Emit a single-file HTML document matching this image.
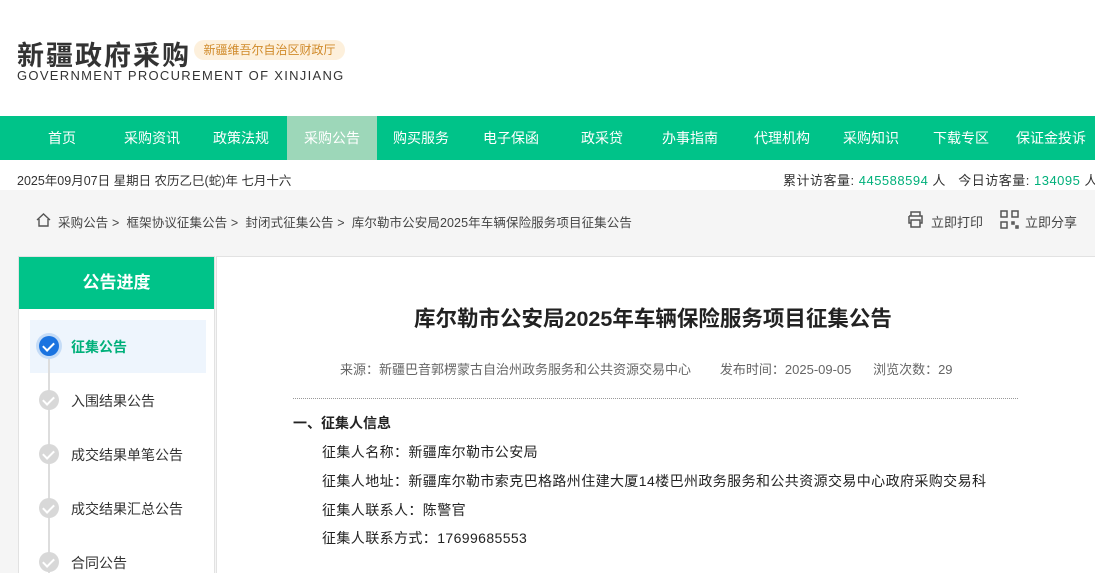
<!DOCTYPE html>
<html><head><meta charset="utf-8"><style>
*{margin:0;padding:0;box-sizing:border-box}
html,body{width:1095px;height:573px;overflow:hidden}
body{background:#fff;font-family:"Liberation Sans","Noto Sans CJK SC",sans-serif;color:#333;position:relative}
.a{position:absolute;white-space:nowrap}
.nav{position:absolute;left:0;top:116px;width:1095px;height:44px;background:#00c389}
.nav span{position:absolute;top:0;height:44px;line-height:44px;color:#fff;font-size:14px;transform:translateX(-50%);white-space:nowrap}
.gray{position:absolute;left:0;top:190px;width:1095px;height:383px;background:#f5f5f5}
.side{position:absolute;left:18px;top:256px;width:197px;height:330px;background:#fff;border:1px solid #e2e2e2;overflow:hidden}
.main{position:absolute;left:216px;top:256px;width:890px;height:330px;background:#fff;border:1px solid #e2e2e2}
.dot{position:absolute;left:20px;width:20px;height:20px;border-radius:50%;background:#d8d8d8}
.dot::after{content:"";position:absolute;left:6px;top:4px;width:5px;height:9px;border:solid #fff;border-width:0 2px 2px 0;transform:rotate(45deg)}
.step{position:absolute;left:52px;font-size:14px;color:#333}
.b{font-size:14px;color:#222;letter-spacing:0.4px}
</style></head><body>
<div class="a" style="left:17px;top:34px;font-size:27px;font-weight:bold;color:#333;letter-spacing:2px">新疆政府采购</div>
<div class="a" style="left:194px;top:40px;width:151px;height:20px;border-radius:10px;background:#fdf0dc;color:#d08a2a;font-size:12px;line-height:20px;text-align:center">新疆维吾尔自治区财政厅</div>
<div class="a" style="left:17px;top:68px;font-size:13px;color:#333;letter-spacing:1.3px">GOVERNMENT PROCUREMENT OF XINJIANG</div>
<div class="nav">
<div style="position:absolute;left:287px;top:0;width:90px;height:44px;background:#9dd7b9"></div>
<span style="left:62px">首页</span><span style="left:152px">采购资讯</span><span style="left:241px">政策法规</span><span style="left:332px">采购公告</span><span style="left:421px">购买服务</span><span style="left:511px">电子保函</span><span style="left:602px">政采贷</span><span style="left:690px">办事指南</span><span style="left:782px">代理机构</span><span style="left:871px">采购知识</span><span style="left:961px">下载专区</span><span style="left:1051px">保证金投诉</span>
</div>
<div class="a" style="left:17px;top:170px;font-size:12.5px">2025年09月07日 星期日 农历乙巳(蛇)年 七月十六</div>
<div class="a" style="left:783px;top:170px;font-size:13px;letter-spacing:0.5px">累计访客量: <span style="color:#00b07a">445588594</span> 人 &nbsp; 今日访客量: <span style="color:#00b07a">134095</span> 人</div>
<div class="gray"></div>
<svg class="a" style="left:35px;top:212px" width="17" height="16" viewBox="0 0 17 16"><path d="M2 8L8.5 2 15 8M4 7v7h9V7" fill="none" stroke="#555" stroke-width="1.4"/></svg>
<div class="a" style="left:58px;top:212px;font-size:12.5px;color:#444;letter-spacing:0.1px">采购公告 &gt; &nbsp;框架协议征集公告 &gt; &nbsp;封闭式征集公告 &gt; &nbsp;库尔勒市公安局2025年车辆保险服务项目征集公告</div>
<svg class="a" style="left:906px;top:210px" width="19" height="18" viewBox="0 0 19 18"><path d="M5 6V2h9v4M3 6h13v7h-2M5 13H3V6M5 10h9v7H5z" fill="none" stroke="#555" stroke-width="1.5"/></svg>
<div class="a" style="left:931px;top:212px;font-size:13px;color:#444">立即打印</div>
<svg class="a" style="left:1000px;top:210px" width="19" height="19" viewBox="0 0 19 19" fill="none" stroke="#555" stroke-width="1.5"><rect x="1" y="1" width="6" height="6"/><rect x="12" y="1" width="6" height="6"/><rect x="1" y="12" width="6" height="6"/><path d="M12 12h2v2h-2zM16 16h2v2h-2z"/></svg>
<div class="a" style="left:1025px;top:212px;font-size:13px;color:#444">立即分享</div>
<div class="side">
<div style="position:absolute;left:0;top:0;width:195px;height:52px;background:#00c389;color:#fff;font-size:17px;font-weight:bold;text-align:center;line-height:52px">公告进度</div>
<div style="position:absolute;left:11px;top:63px;width:176px;height:53px;background:#eef5fd"></div>
<div style="position:absolute;left:29px;top:100px;width:2px;height:240px;background:#ddd"></div>
<div class="dot" style="top:79px;background:#1a73e0;box-shadow:0 0 0 3px #c5dcf7"></div>
<div class="step" style="top:80px;color:#00b07a;font-weight:bold">征集公告</div>
<div class="dot" style="top:133px"></div><div class="step" style="top:134px">入围结果公告</div>
<div class="dot" style="top:187px"></div><div class="step" style="top:188px">成交结果单笔公告</div>
<div class="dot" style="top:241px"></div><div class="step" style="top:242px">成交结果汇总公告</div>
<div class="dot" style="top:295px"></div><div class="step" style="top:296px">合同公告</div>
</div>
<div class="main"></div>
<div class="a" style="left:414px;top:302px;font-size:21.5px;font-weight:bold;color:#222">库尔勒市公安局2025年车辆保险服务项目征集公告</div>
<div class="a" style="left:340px;top:359px;font-size:13px;color:#666">来源：新疆巴音郭楞蒙古自治州政务服务和公共资源交易中心 &nbsp; &nbsp; &nbsp; &nbsp;发布时间：2025-09-05 &nbsp; &nbsp; &nbsp;浏览次数：29</div>
<div class="a" style="left:293px;top:398px;width:725px;border-top:1px dotted #999"></div>
<div class="a" style="left:293px;top:413px;font-size:14px;font-weight:bold;color:#222">一、征集人信息</div>
<div class="a b" style="left:322px;top:442px">征集人名称：新疆库尔勒市公安局</div>
<div class="a b" style="left:322px;top:471px">征集人地址：新疆库尔勒市索克巴格路州住建大厦14楼巴州政务服务和公共资源交易中心政府采购交易科</div>
<div class="a b" style="left:322px;top:500px">征集人联系人：陈警官</div>
<div class="a b" style="left:322px;top:528px">征集人联系方式：17699685553</div>
</body></html>
